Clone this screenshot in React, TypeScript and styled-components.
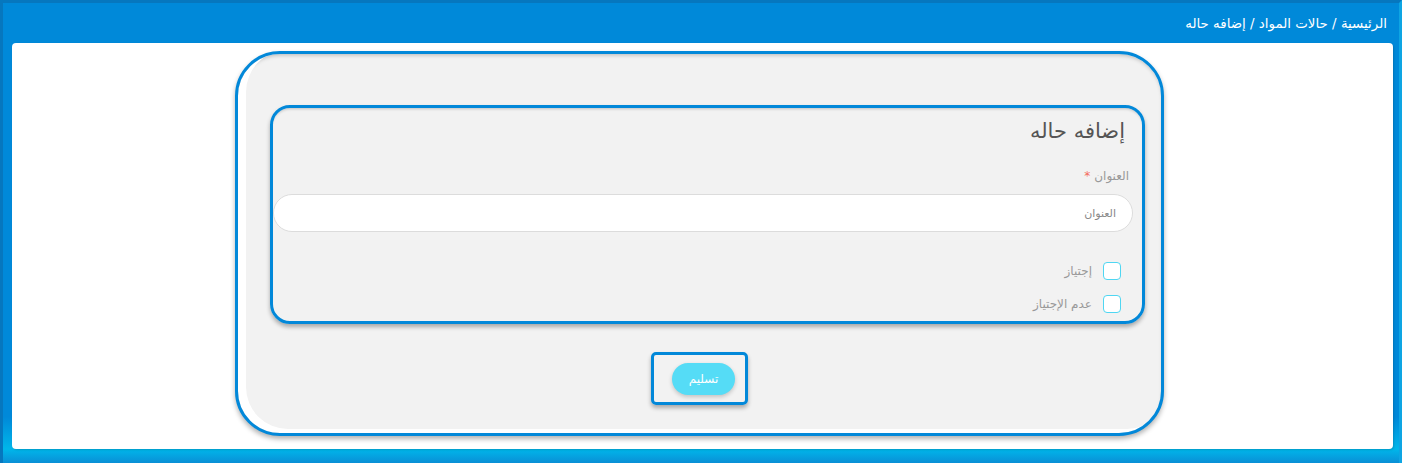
import React from "react";
import styled, { createGlobalStyle } from "styled-components";

const GlobalStyle = createGlobalStyle`
	html, body {
		margin: 0;
		padding: 0;
		background: #0089d9;
	}
	* {
		box-sizing: border-box;
	}
`;

const Page = styled.div`
	width: 1402px;
	height: 463px;
	background: linear-gradient(to bottom, #0089d9 0%, #0089d9 90%, #00b6ea 97%, #0a8fd6 100%);
	border-top: 3px solid #0677be;
	border-left: 3px solid #0677be;
	border-right: 3px solid #0ea5e3;
	display: flex;
	flex-direction: column;
	font-family: "DejaVu Sans", "Noto Sans", sans-serif;
	direction: rtl;
`;

const TopBar = styled.div`
	height: 40px;
	display: flex;
	align-items: center;
	padding: 0 12px;
	color: #fff;
	font-size: 13.4px;
`;

const Card = styled.div`
	margin: 0 6px 0 9px;
	height: 406px;
	background: #fff;
	border-radius: 4px;
	box-shadow: 1px 1px 2px rgba(0, 0, 0, 0.15);
	display: flex;
	justify-content: center;
	padding: 8px 6px 0 0;
`;

const Panel = styled.div`
	width: 929px;
	height: 385px;
	border: 3px solid #0288d9;
	border-radius: 45px;
	background: #f2f2f2;
	overflow: hidden;
	box-shadow: inset 8px -4px 0 #fff, inset 0 3px 4px -2px rgba(0, 0, 0, 0.25),
		0 3px 5px rgba(0, 0, 0, 0.3);
	padding: 51px 16px 0 32px;
	display: flex;
	flex-direction: column;
	align-items: stretch;
`;

const Fieldset = styled.div`
	height: 219px;
	border: 3px solid #0288d9;
	border-radius: 20px;
	box-shadow: 0 3px 4px rgba(0, 0, 0, 0.3), inset 0 3px 3px -2px rgba(0, 0, 0, 0.2);
	padding: 8px 9px 0 0;
	display: flex;
	flex-direction: column;
`;

const Title = styled.h3`
	margin: 0 8px 0 0;
	font-weight: 400;
	font-size: 21px;
	color: #555;
	line-height: 30px;
`;

const Label = styled.label`
	display: block;
	margin: 22px 4px 10px 0;
	font-size: 12px;
	color: #999;
	line-height: 16px;
`;

const Star = styled.span`
	color: #f56b5b;
	margin-right: 4px;
`;

const TextInput = styled.input`
	height: 38px;
	width: 100%;
	flex-shrink: 0;
	border: 1px solid #dcdcdc;
	border-radius: 19px;
	background: #fff;
	padding: 0 16px;
	font-family: inherit;
	font-size: 11px;
	color: #555;
	direction: rtl;
	outline: none;
	&::placeholder {
		color: #888;
	}
`;

const Options = styled.div`
	margin-top: 30px;
	display: flex;
	flex-direction: column;
	gap: 15px;
	padding-right: 12px;
`;

const OptionRow = styled.label`
	display: flex;
	align-items: center;
	gap: 11px;
	font-size: 12px;
	color: #999;
	height: 18px;
	flex-shrink: 0;
`;

const Box = styled.span`
	width: 18px;
	height: 18px;
	flex-shrink: 0;
	border: 1px solid #4fd6f2;
	border-radius: 4px;
	background: #fff;
`;

const ButtonFrame = styled.div`
	margin: 28px 16px 0 0;
	align-self: center;
	width: 97px;
	height: 53px;
	border: 3px solid #0288d9;
	border-radius: 5px;
	box-shadow: 0 3px 4px rgba(0, 0, 0, 0.3);
	display: flex;
	align-items: center;
	justify-content: center;
	padding-left: 8px;
`;

const SubmitButton = styled.button`
	width: 63px;
	height: 32px;
	border: none;
	border-radius: 16px;
	background: #55dcf6;
	color: #fff;
	font-family: inherit;
	font-size: 12px;
	box-shadow: 0 2px 4px rgba(0, 0, 0, 0.2);
	cursor: pointer;
`;

const App: React.FC = () => {
	return (
		<>
			<GlobalStyle />
			<Page>
				<TopBar>الرئيسية / حالات المواد / إضافه حاله</TopBar>
				<Card>
					<Panel>
						<Fieldset>
							<Title>إضافه حاله</Title>
							<Label>
								العنوان<Star>*</Star>
							</Label>
							<TextInput placeholder="العنوان" />
							<Options>
								<OptionRow>
									<Box />
									إجتياز
								</OptionRow>
								<OptionRow>
									<Box />
									عدم الإجتياز
								</OptionRow>
							</Options>
						</Fieldset>
						<ButtonFrame>
							<SubmitButton>تسليم</SubmitButton>
						</ButtonFrame>
					</Panel>
				</Card>
			</Page>
		</>
	);
};

export default App;
